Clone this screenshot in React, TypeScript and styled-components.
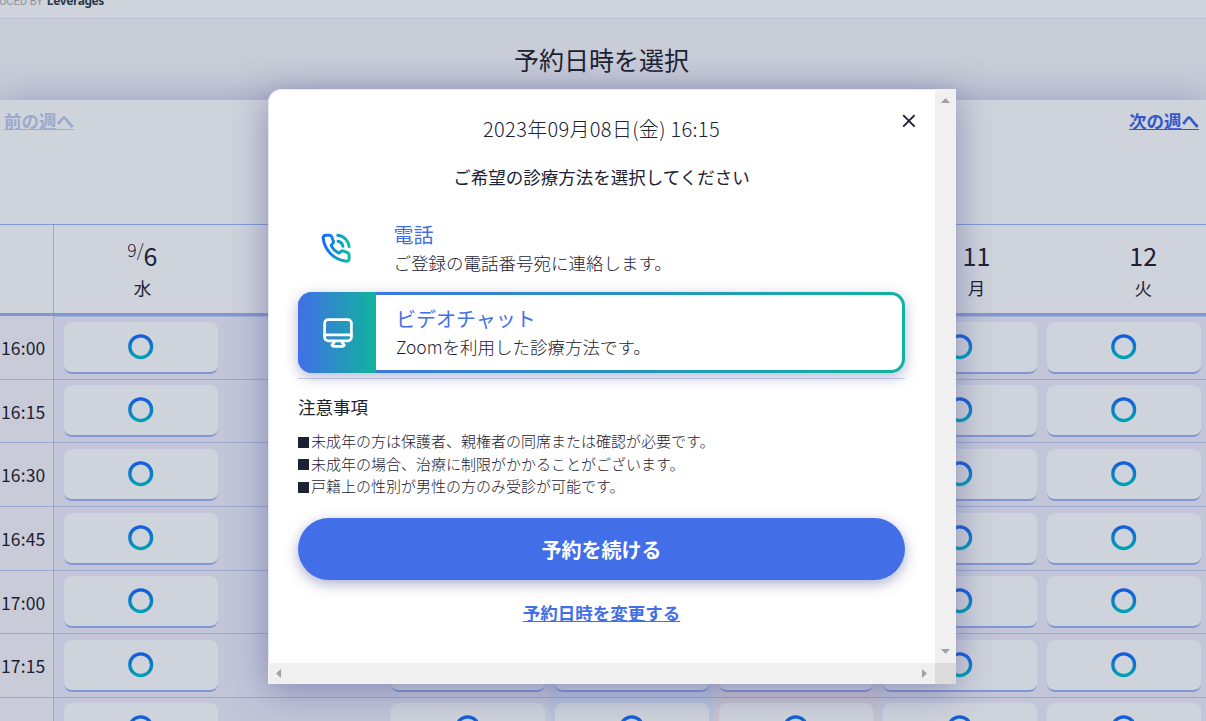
import React from 'react';
import styled, {createGlobalStyle} from 'styled-components';

const GlobalStyle = createGlobalStyle`
    *{
        box-sizing:border-box;
    }
    html,body,#root{
        margin:0;
        height:721px;
        overflow:hidden;
    }
    body{
        background:#c9cdd8;
        color:#1c2133;
        font-family:"Noto Sans CJK JP",sans-serif;
        font-size:17.5px;
    }
    p,h1,h2,h3,ul{
        margin:0;
        padding:0;
        font-weight:400;
    }
    button{
        border:none;
        padding:0;
        background:none;
        font-family:inherit;
        cursor:pointer;
    }
`

const times = ['16:00','16:15','16:30','16:45','17:00','17:15','17:30']

const days = [
    {month:'9/', date:'6', name:'水', open:true},
    {date:'7', name:'木', open:false},
    {date:'8', name:'金', open:true},
    {date:'9', name:'土', open:true, tone:'#b9c4dc'},
    {date:'10', name:'日', open:true, tone:'#c8c3d0'},
    {date:'11', name:'月', open:true},
    {date:'12', name:'火', open:true},
]

const notes = [
    '未成年の方は保護者、親権者の同席または確認が必要です。',
    '未成年の場合、治療に制限がかかることがございます。',
    '戸籍上の性別が男性の方のみ受診が可能です。',
]

const PhoneIcon = ()=>(
    <svg width="30.5" height="30.5" viewBox="0 0 32 32" fill="none">
        <defs>
            <linearGradient id="phone" x1="1" y1="0" x2="31" y2="0" gradientUnits="userSpaceOnUse">
                <stop stopColor="#1463ff"/>
                <stop offset="1" stopColor="#08c3a4"/>
            </linearGradient>
        </defs>
        <g stroke="url(#phone)" strokeWidth="3.1" strokeLinecap="round" strokeLinejoin="round">
            <path d="M4.9 2.4H8.9C10 2.4 10.8 3 11.2 4L12.9 8.1C13.4 9.3 13.2 10.2 12.3 11.1L11.2 12.3C10.7 12.8 10.7 13.2 11 13.8C12.5 16.8 15.1 19.4 18.1 20.9C18.7 21.2 19.1 21.2 19.6 20.7L20.8 19.5C21.7 18.7 22.6 18.5 23.7 18.9L27.8 20.6C28.9 21.1 29.5 21.9 29.5 23V27C29.5 28.8 28.3 29.8 26.5 29.6C13.8 28.3 3.7 18.2 2.3 5.4C2.1 3.7 3.2 2.4 4.9 2.4Z"/>
            <path d="M17.9 8.6C20.6 9.2 22.5 11.2 23.1 13.9"/>
            <path d="M17.6 2.4C23.9 3 28.9 8 29.5 14.3"/>
        </g>
    </svg>
)

const MonitorIcon = ()=>(
    <svg width="30" height="30" viewBox="0 0 30 30" fill="none" stroke="#fff" strokeWidth="2.7" strokeLinecap="round" strokeLinejoin="round">
        <rect x="1.6" y="1.6" width="26.8" height="21.3" rx="3.6"/>
        <path d="M1.6 16.8H28.4"/>
        <path d="M11.3 23.2C11.3 24.8 10.6 25.5 9.6 26.1C8.4 26.9 8.8 28.3 10.2 28.3H20C21.4 28.3 21.8 26.9 20.6 26.1C19.6 25.5 18.9 24.8 18.9 23.2"/>
    </svg>
)

const Circle = ()=>(
    <svg width="26" height="26" viewBox="0 0 26 26" fill="none">
        <defs>
            <linearGradient id="circle" x1="0" y1="0" x2="0" y2="1">
                <stop stopColor="#155bdd"/>
                <stop offset="1" stopColor="#00a0b4"/>
            </linearGradient>
        </defs>
        <circle cx="12.7" cy="12.7" r="10.9" stroke="url(#circle)" strokeWidth="3.3"/>
    </svg>
)

const Calendar = ()=>(
    <CalendarStyle>
        <WeekNav>
            <WeekLink $disabled>前の週へ</WeekLink>
            <WeekLink>次の週へ</WeekLink>
        </WeekNav>
        <DayHeader>
            <Corner/>
            <DayList>
                {days.map((day)=>(
                    <Day key={day.date}>
                        <DayNumber>{day.month&&<sup>{day.month}</sup>}{day.date}</DayNumber>
                        <DayName>{day.name}</DayName>
                    </Day>
                ))}
            </DayList>
        </DayHeader>
        {times.map((time)=>(
            <TimeRow key={time}>
                <Time>{time}</Time>
                {days.map((day)=>(
                    <Cell key={day.date} $tone={day.tone}>
                        {day.open&&<Slot><Circle/></Slot>}
                    </Cell>
                ))}
            </TimeRow>
        ))}
    </CalendarStyle>
)

const ReserveModal = ()=>(
    <ModalStyle>
        <ModalBody>
            <Close aria-label="閉じる">
                <svg width="14" height="14" viewBox="0 0 14 14" stroke="#1c2133" strokeWidth="1.9">
                    <path d="M1.2 1.2L12.6 12.6M12.6 1.2L1.2 12.6"/>
                </svg>
            </Close>
            <ModalDate>2023年09月08日(金) 16:15</ModalDate>
            <Lead>ご希望の診療方法を選択してください</Lead>
            <Methods>
                <Method>
                    <MethodIcon><PhoneIcon/></MethodIcon>
                    <MethodText>
                        <h3>電話</h3>
                        <p>ご登録の電話番号宛に連絡します。</p>
                    </MethodText>
                </Method>
                <Method $active>
                    <MethodIcon $active><MonitorIcon/></MethodIcon>
                    <MethodText $active>
                        <h3>ビデオチャット</h3>
                        <p>Zoomを利用した診療方法です。</p>
                    </MethodText>
                </Method>
            </Methods>
            <NoteTitle>注意事項</NoteTitle>
            <NoteList>
                {notes.map((note)=><li key={note}>{note}</li>)}
            </NoteList>
            <Submit>予約を続ける</Submit>
            <Change>予約日時を変更する</Change>
        </ModalBody>
        <ScrollBar $vertical>
            <svg width="9" height="5" viewBox="0 0 9 5"><path d="M0 5L4.5 0L9 5Z"/></svg>
            <svg width="9" height="5" viewBox="0 0 9 5"><path d="M0 0L4.5 5L9 0Z"/></svg>
        </ScrollBar>
        <ScrollBar>
            <svg width="5" height="9" viewBox="0 0 5 9"><path d="M5 0L0 4.5L5 9Z"/></svg>
            <svg width="5" height="9" viewBox="0 0 5 9"><path d="M0 0L5 4.5L0 9Z"/></svg>
        </ScrollBar>
        <ScrollCorner/>
    </ModalStyle>
)

const App = ()=>(
    <>
        <GlobalStyle/>
        <Header>
            <span>PRODUCED BY</span>
            <b>Leverages</b>
        </Header>
        <Title>予約日時を選択</Title>
        <Calendar/>
        <ReserveModal/>
    </>
)

export default App;

const Header = styled.header`
    height:19px;
    background:#cfd3db;
    border-bottom:1px solid #bfc3da;
    display:flex;
    justify-content:flex-end;
    align-items:flex-start;
    gap:4px;
    padding-right:1102px;
    white-space:nowrap;
    overflow:hidden;
    span{
        font:400 11px/14px Roboto,sans-serif;
        margin-top:-5px;
        color:#8e939f;
    }
    b{
        font:700 12px/14px "Noto Sans",sans-serif;
        letter-spacing:-.4px;
        margin-top:-6px;
        color:#2b3d4c;
    }
`

const Title = styled.h1`
    height:81px;
    text-align:center;
    padding-right:3px;
    font-size:25px;
    line-height:80px;
`

const CalendarStyle = styled.main`
    background:#cfd3db;
    box-shadow:0 0 35px rgba(96,98,160,.45);
`

const WeekNav = styled.nav`
    height:124px;
    display:flex;
    justify-content:space-between;
    padding:8px 7px 0 4px;
    align-items:flex-start;
`

const WeekLink = styled.a<{$disabled?:boolean}>`
    color:${({$disabled})=>$disabled?'#9ba9ce':'#3359c9'};
    font-weight:700;
    line-height:26px;
    text-decoration:underline;
`

const DayHeader = styled.div`
    display:flex;
    height:92.2px;
    border-top:1px solid #8197d3;
    border-bottom:3px solid #8197d3;
`

const Corner = styled.div`
    flex:0 0 54px;
    border-right:1px solid #9ba8cd;
`

const DayList = styled.div`
    display:grid;
    flex:0 0 1168px;
    padding-left:5px;
    grid-template-columns:repeat(7,166.8px);
`

const Day = styled.div`
    text-align:center;
    padding-top:12px;
`

const DayNumber = styled.p`
    font-size:25px;
    line-height:36px;
    sup{
        font-size:17.5px;
        font-weight:300;
        line-height:0;
        vertical-align:9px;
    }
`

const DayName = styled.p`
    margin-top:2px;
    line-height:26px;
`

const TimeRow = styled.div`
    display:flex;
    height:63.65px;
    border-bottom:1px solid #9ba8cd;
    background:#c2c6d8;
    &:nth-child(3){
        box-shadow:inset 0 1px #a5b1d2;
    }
`

const Time = styled.div`
    flex:0 0 54px;
    display:flex;
    align-items:center;
    padding:0 0 0 1px;
    letter-spacing:.15px;
    background:#c9ccd8;
    border-right:1px solid #9ba8cd;
    margin-right:4.6px;
`

const Cell = styled.div<{$tone?:string}>`
    flex:0 0 163.9px;
    padding:5.4px 5px 0;
    background:${({$tone})=>$tone??'transparent'};
`

const Slot = styled.button`
    width:154px;
    height:52px;
    display:flex;
    align-items:center;
    justify-content:center;
    background:#cfd3db;
    border-bottom:2px solid #8197d3;
    border-radius:8px;
`

const ModalStyle = styled.section`
    position:absolute;
    left:268px;
    top:89px;
    width:688px;
    height:595px;
    display:grid;
    grid-template-columns:667px 21px;
    grid-template-rows:574px 21px;
    background:#fff;
    border-radius:14px 0 0 0;
    box-shadow:0 6px 36px rgba(72,76,145,.5);
`

const ModalBody = styled.div`
    position:relative;
    padding:22px 30px 0 29px;
    border-top:1px solid #e7e9f3;
    border-left:1px solid #e7e9f3;
    border-radius:14px 0 0 0;
    display:flex;
    flex-direction:column;
    text-align:center;
`

const Close = styled.button`
    position:absolute;
    top:24px;
    right:19px;
    display:flex;
`

const ModalDate = styled.h2`
    font-size:20px;
    font-weight:300;
    letter-spacing:.32px;
    line-height:34px;
`

const Lead = styled.p`
    margin-top:18px;
    line-height:26px;
`

const Methods = styled.div`
    margin-top:17px;
    padding-bottom:5px;
    border-bottom:1px solid #c9d0ec;
`

const Method = styled.div<{$active?:boolean}>`
    height:${({$active})=>$active?'81px':'85px'};
    display:flex;
    text-align:left;
    border-radius:14px;
    ${({$active})=>$active&&`
        padding:3px 3px 3px 0;
        background:linear-gradient(90deg,#426fe8,#10b39d);
        box-shadow:0 4px 14px rgba(72,76,145,.4);
    `}
`

const MethodIcon = styled.div<{$active?:boolean}>`
    flex:0 0 78px;
    display:flex;
    align-items:center;
    justify-content:center;
    padding:0 2px 2px 0;
    ${({$active})=>$active&&`
        margin:-3px 0;
        padding:1px 0 0 2px;
        border-radius:14px 0 0 14px;
        background:linear-gradient(90deg,#426fe8,#10b39d);
    `}
`

const MethodText = styled.div<{$active?:boolean}>`
    flex:1;
    padding:${({$active})=>$active?'9px 20px 0':'13px 17.5px 0'};
    border-radius:0 11px 11px 0;
    background:${({$active})=>$active?'#fff':'none'};
    h3{
        color:#426fe8;
        font-size:20px;
        line-height:30px;
    }
    p{
        font-weight:300;
        line-height:26px;
    }
`

const NoteTitle = styled.h3`
    margin-top:15px;
    font-size:17.5px;
    line-height:26px;
    text-align:left;
`

const NoteList = styled.ul`
    margin-top:10px;
    list-style:none;
    text-align:left;
    font-size:15px;
    font-weight:300;
    line-height:22.6px;
    li{
        display:flex;
        align-items:center;
        gap:2px;
    }
    li:before{
        content:'';
        width:11px;
        height:11px;
        margin-top:2px;
        background:#1c2133;
    }
`

const Submit = styled.button`
    margin-top:20px;
    padding-top:1px;
    height:62px;
    border-radius:31px;
    background:#426fe8;
    color:#fff;
    font-size:20px;
    font-weight:700;
    box-shadow:0 4px 14px rgba(72,76,145,.45);
`

const Change = styled.a`
    align-self:center;
    margin-top:20px;
    color:#426fe8;
    font-weight:700;
    line-height:26px;
    text-decoration:underline;
`

const ScrollBar = styled.div<{$vertical?:boolean}>`
    display:flex;
    flex-direction:${({$vertical})=>$vertical?'column':'row'};
    align-items:center;
    justify-content:space-between;
    padding:${({$vertical})=>$vertical?'9px 0':'0 8px'};
    background:#f0f0f0;
    fill:#a3a3a3;
`

const ScrollCorner = styled.div`
    background:#dcdcdc;
`
